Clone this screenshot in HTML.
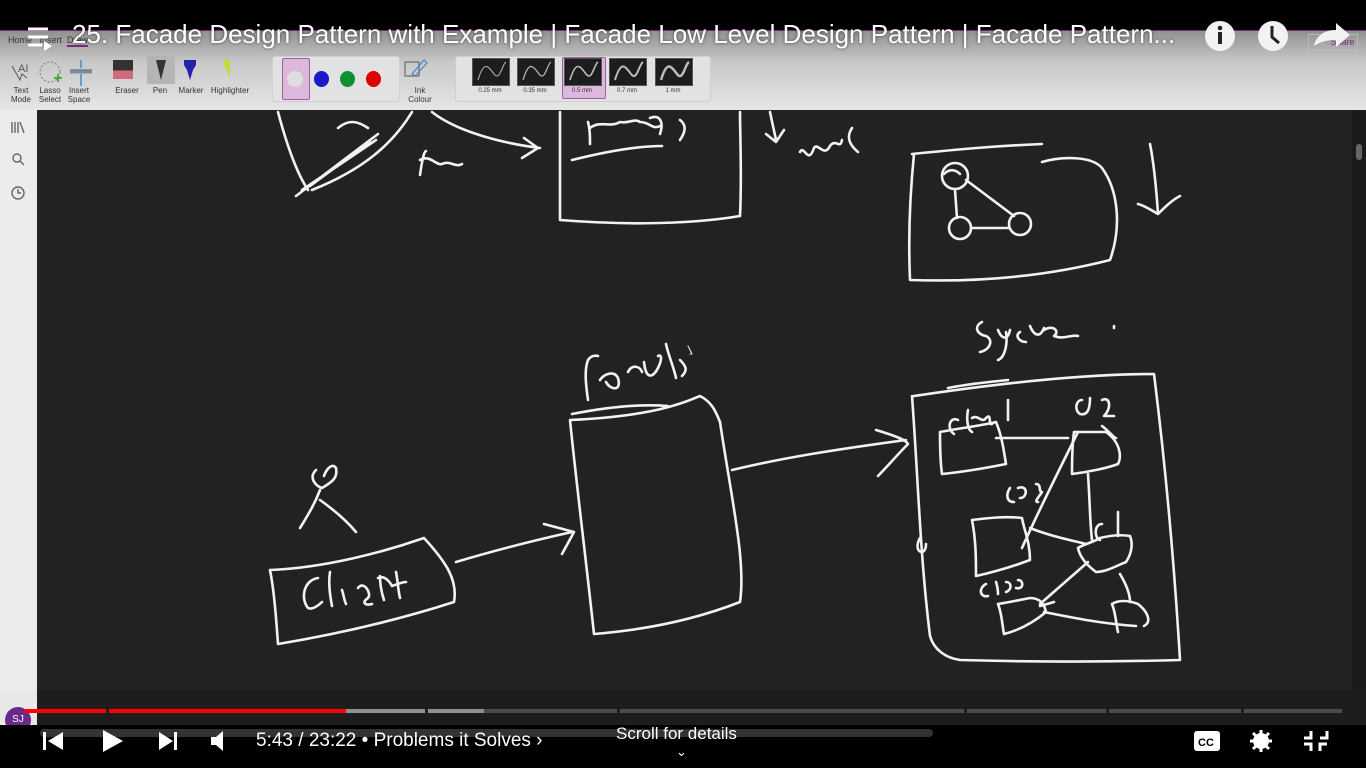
<!DOCTYPE html>
<html><head><meta charset="utf-8"><style>
html,body{margin:0;padding:0;width:1366px;height:768px;overflow:hidden;background:#000;font-family:"Liberation Sans",sans-serif}
.abs{position:absolute}
#tb{left:0;top:30px;width:1366px;height:80px;background:linear-gradient(#8f8f8f,#c8c8c8 40%,#e6e6e6);border-bottom:1px solid #aaa}
#side{left:0;top:110px;width:37px;height:615px;background:#ececec}
#canvas{left:37px;top:110px;width:1315px;height:615px;background:#222}
#sb{left:1352px;top:110px;width:14px;height:615px;background:#1b1b1b}
.lbl{font-size:8px;color:#333;text-align:center;line-height:9px}
.grp{background:#e2e2e2;border:1px solid #cfcfcf;border-radius:3px}
.pen{width:36px;height:26px;background:#1d1d1d;border:1px solid #555}
.mm{font-size:6px;color:#333;text-align:center}
#title{left:72px;top:19px;color:#fff;font-size:26px;white-space:nowrap;text-shadow:0 0 3px rgba(0,0,0,.6)}
.ctl{color:#fff;font-size:19px}
</style></head><body>
<div class="abs" id="tb"></div>
<div class="abs" style="left:0;top:30px;width:1366px;height:1px;background:#7a2a7a"></div>
<div class="abs" style="left:8px;top:35px;font-size:9px;color:#333">Home &nbsp; Insert &nbsp;<span style="border-bottom:2px solid #7a2a7a">Draw</span></div>
<!-- tools -->
<svg class="abs" style="left:8px;top:58px" width="90" height="30" viewBox="0 0 90 30"><path d="M4 8l8 14 2-6 5 4" fill="none" stroke="#555"/><text x="10" y="14" font-size="11" fill="#555" font-family="Liberation Sans">AI</text><circle cx="42" cy="14" r="10" fill="none" stroke="#777" stroke-dasharray="2 2"/><path d="M46 20h8M50 16v8" stroke="#2a2" stroke-width="1.5"/><path d="M62 12h22M73 2v8M73 16v12" stroke="#4a8ac6" stroke-width="1.5"/><path d="M62 14h22" stroke="#888" stroke-width="3"/></svg>
<div class="abs lbl" style="left:6px;top:86px;width:30px">Text<br>Mode</div>
<div class="abs lbl" style="left:35px;top:86px;width:30px">Lasso<br>Select</div>
<div class="abs lbl" style="left:64px;top:86px;width:30px">Insert<br>Space</div>
<div class="abs" style="left:113px;top:60px;width:20px;height:19px;background:linear-gradient(#333 55%,#d06a7a 55%)"></div>
<div class="abs" style="left:147px;top:56px;width:28px;height:28px;background:#b5b5b5;border-radius:2px"></div>
<svg class="abs" style="left:150px;top:58px" width="80" height="24"><path d="M6 2h10l-2 8-3 12-3-12z" fill="#333"/><path d="M34 2h12v5l-3 5-3 10-3-10-3-5z" fill="#2222aa"/><path d="M74 2h12v6l-3 4-3 8-3-8-3-4z" fill="#c8d838"/></svg>
<div class="abs lbl" style="left:110px;top:86px;width:34px">Eraser</div>
<div class="abs lbl" style="left:148px;top:86px;width:24px">Pen</div>
<div class="abs lbl" style="left:176px;top:86px;width:30px">Marker</div>
<div class="abs lbl" style="left:207px;top:86px;width:46px">Highlighter</div>
<div class="abs grp" style="left:272px;top:56px;width:126px;height:44px"></div>
<div class="abs" style="left:282px;top:58px;width:26px;height:40px;background:#dcb8dc;border:1px solid #a060a0;border-radius:2px"></div>
<div class="abs" style="left:287px;top:71px;width:16px;height:16px;border-radius:50%;background:#ddd"></div>
<div class="abs" style="left:314px;top:71px;width:15px;height:16px;border-radius:50%;background:#1a1acc"></div>
<div class="abs" style="left:340px;top:71px;width:15px;height:16px;border-radius:50%;background:#109030"></div>
<div class="abs" style="left:366px;top:71px;width:15px;height:16px;border-radius:50%;background:#dd0000"></div>
<svg class="abs" style="left:404px;top:58px" width="36" height="22"><rect x="1" y="4" width="14" height="14" fill="none" stroke="#555"/><path d="M8 16l12-14 3 3-12 13z" fill="none" stroke="#3a7ac6"/></svg>
<div class="abs lbl" style="left:404px;top:86px;width:32px">Ink<br>Colour</div>
<div class="abs grp" style="left:455px;top:56px;width:254px;height:44px"></div>
<div class="abs" style="left:562px;top:57px;width:42px;height:40px;background:#dcb8dc;border:1px solid #a060a0;border-radius:2px"></div>
<div class="abs pen" style="left:472px;top:58px"></div><div class="abs pen" style="left:517px;top:58px"></div><div class="abs pen" style="left:564px;top:58px"></div><div class="abs pen" style="left:609px;top:58px"></div><div class="abs pen" style="left:655px;top:58px"></div>
<svg class="abs" style="left:472px;top:58px" width="240" height="28" fill="none" stroke="#bbb"><path d="M6 22c6-20 10-14 16-6s8-10 12-12" stroke-width="1"/><path d="M51 22c6-20 10-14 16-6s8-10 12-12" stroke-width="1.2"/><path d="M98 22c6-20 10-14 16-6s8-10 12-12" stroke-width="1.6"/><path d="M143 22c6-20 10-14 16-6s8-10 12-12" stroke-width="2"/><path d="M189 22c6-20 10-14 16-6s8-10 12-12" stroke-width="2.5"/></svg>
<div class="abs mm" style="left:470px;top:88px;width:40px">0.25 mm</div><div class="abs mm" style="left:515px;top:88px;width:40px">0.35 mm</div><div class="abs mm" style="left:562px;top:88px;width:40px">0.5 mm</div><div class="abs mm" style="left:607px;top:88px;width:40px">0.7 mm</div><div class="abs mm" style="left:653px;top:88px;width:40px">1 mm</div>
<div class="abs" style="left:1308px;top:34px;width:48px;height:15px;border:1px solid #bbb;font-size:9px;color:#7a2a7a;text-align:right;line-height:15px">Share&nbsp;</div>

<div class="abs" id="side"></div>
<svg class="abs" style="left:8px;top:118px" width="22" height="84" fill="none" stroke="#666" stroke-width="1.4"><path d="M4 4v11M7 4v11M10 4v11M12 4l4 11"/><circle cx="9" cy="40" r="4"/><path d="M12 43l4 4"/><circle cx="10" cy="75" r="6"/><path d="M10 71v4h3"/></svg>
<div class="abs" id="canvas"></div>
<div class="abs" id="sb"><div style="margin:34px 0 0 4px;width:6px;height:16px;background:#666;border-radius:3px"></div></div>

<svg class="abs" style="left:0;top:0" width="1366" height="768" fill="none" stroke="#f2f2f2" stroke-width="2.6" stroke-linecap="round" stroke-linejoin="round">
<!-- top-left shapes -->
<path d="M278 112c8 30 18 60 30 78M312 190c50-20 80-45 100-78"/>
<path d="M296 196l82-62M302 190l74-50M310 186l60-44M338 128c10-8 18-8 30 0"/>
<path d="M420 175c2-14 4-24 6-24M420 160c10-6 16 6 22 4 8-4 14 4 20 0M432 112c20 16 60 30 108 36M524 138l14 10-16 10"/>
<path d="M560 112v108c50 4 120 6 180-4 2-40 0-80 0-104"/>
<path d="M588 122c2 8 2 14 2 22M590 128c10-8 20 0 30-6 8 2 14-4 20 0 10 0 12 8 20 4M650 118c10-4 14 4 10 16M680 120c8 6 4 14 0 20M572 160c40-10 70-14 90-14"/>
<path d="M770 112c2 10 4 18 6 28M766 134l10 8 8-12M800 152c4-8 8 14 14-4 4-6 10 10 16-2 6-8 10 4 12-6M852 128c-4 6-6 14 6 24"/>
<path d="M914 154c-4 40-6 80-4 126 60 2 130-2 200-20 12-34 8-70-8-92-10-12-40-12-60-6M912 154c40-4 80-8 130-10"/>
<circle cx="955" cy="176" r="13"/><circle cx="960" cy="228" r="11"/><circle cx="1020" cy="224" r="11"/><path d="M955 190l2 28M966 180l48 36M972 228h36M944 174c6-6 12-4 16 0"/>
<path d="M1150 144c4 20 6 40 8 70M1138 204c8 2 16 8 20 10 6-6 14-14 22-18"/>
<!-- facade -->
<path d="M588 400c-2-14-4-30 0-40 4-6 10-4 10-4M600 380c4-6 14-10 18-2 4 14-8 12-12 4M628 372c4-8 12-6 14 0M644 362c2 20 10 14 14 6s4-14 0-12M666 344c2 10 8 24 10 34M680 360c6 6 8 10 2 16M572 414c40-8 70-10 96-8"/>
<path d="M570 420c6 60 16 140 24 214 50-4 100-14 146-32 6-40-8-100-20-180-4-10-8-20-20-26-10 4-40 20-130 24"/>
<path d="M732 470c50-12 100-20 174-30M876 430c20 6 30 10 32 14-10 10-22 24-30 32"/>
<!-- client -->
<path d="M316 470c-8 8 0 16 6 18 10-6 16-10 14-20-4-6-10 2-12 8M320 490c-6 16-14 28-20 38M320 500c14 10 26 20 36 32"/>
<path d="M270 570c4 20 6 46 8 74 60-10 120-24 176-42 4-22-8-40-30-64-40 14-100 30-154 32"/>
<path d="M318 578c-14 2-18 20-10 30 4 2 10-2 14-6M330 572c-2 12 0 24 2 34M342 590c2 6 2 10 4 14M358 588c6-8 14 6 10 10-6 4-4 8 4 6M380 576c0 10 2 18 4 24M378 578c8-4 14 8 14 8M392 586c6-2 10-4 14-4M396 572c2 10 2 18 4 26"/>
<path d="M456 562c40-12 80-22 116-30M544 524l30 8-12 22"/>
<!-- system -->
<path d="M982 322c-8 4-6 12 4 14 8 4 4 14-6 16M998 330c4 10 10 10 12 0M1006 332c2 14-2 26-8 28M1020 332c-6 4 0 10 6 10M1030 326c4 10 10 12 14 2M1044 330c10-6 16 2 10 6 10 4 18-2 24 0M1114 326v2"/>
<path d="M912 396c6 80 8 160 18 240 4 14 16 22 30 24 74 2 150 2 220 0-6-100-14-190-26-286-70 0-160 10-240 22M948 388c20-4 40-6 60-8M920 538c-8 14 6 20 6 6"/>
<path d="M958 420c-8-4-12 8-4 14M968 410c-2 10 0 20 4 22M972 418c6-4 10 6 14 0 6-6 2 8 6 6M1008 400v20M1082 400c-6 0-8 10-2 14 8 2 10-6 10-16M1102 400c8-4 10 8 2 16h10"/>
<path d="M940 432c20-4 40-6 56-10 6 14 8 30 10 42-20 4-44 8-64 10-2-14-2-28-2-42zM996 438h72M1074 432h32c14 10 16 24 12 32-10 4-30 8-46 10 0-14 0-28 2-42M1102 426c8 6 12 12 14 12"/>
<path d="M1088 474c2 30 2 50 4 66M1078 432c-20 40-40 80-56 116"/>
<path d="M1010 488c-4 6-4 14 4 14M1018 488c10-4 10 10 2 10M1036 484c6 0 2 8 6 8-4 6-8 10-4 10"/>
<path d="M972 520c4 20 4 40 4 56 18-4 38-10 54-16 0-18-6-30-8-42-16-2-34 0-50 2M1030 528c20 8 40 12 56 16"/>
<path d="M1102 524c-8 0-8 14-2 16M1118 512v24"/>
<path d="M1078 548c6-4 16-6 22-10 8-2 18-4 30-2 4 10 0 20-4 26-10 4-20 10-30 10-8-6-16-14-18-24M1088 562l-48 42M1040 606l14-4"/>
<path d="M986 584c-8 4-6 14 2 12M996 582c2 6 2 10 2 12M1006 582c6 0 6 8 0 10M1018 580c6 0 6 10-2 8"/>
<path d="M998 604c4 10 4 20 6 30 16-4 30-12 42-22-2-10-8-14-16-14-10 2-20 4-32 6M1044 612c30 6 60 12 92 14M1112 604c6-4 16-4 26 0 10 8 14 18 6 22M1112 604c4 10 4 20 6 28M1120 574c6 10 10 20 10 28"/>
<path d="M688 346l4 8-2 0" stroke-width="1"/>
</svg>

<!-- progress area -->
<div class="abs" style="left:0;top:690px;width:1366px;height:35px;background:#1d1d1d"></div>
<div class="abs" style="left:0;top:690px;width:37px;height:35px;background:#e8e8e8"></div>
<div class="abs" style="left:5px;top:707px;width:26px;height:26px;border-radius:50%;background:#6a2a8a;color:#fff;font-size:10px;line-height:26px;text-align:center">SJ</div>
<div class="abs" style="left:24px;top:709px;width:1318px;height:4px;background:#4a4a4a"></div>
<div class="abs" style="left:346px;top:709px;width:138px;height:4px;background:#909090"></div>
<div class="abs" style="left:24px;top:709px;width:322px;height:4px;background:#f00"></div>
<div class="abs" style="left:106px;top:709px;width:3px;height:4px;background:#1d1d1d"></div>
<div class="abs" style="left:425px;top:709px;width:3px;height:4px;background:#1d1d1d"></div>
<div class="abs" style="left:617px;top:709px;width:3px;height:4px;background:#1d1d1d"></div>
<div class="abs" style="left:964px;top:709px;width:3px;height:4px;background:#1d1d1d"></div>
<div class="abs" style="left:1106px;top:709px;width:3px;height:4px;background:#1d1d1d"></div>
<div class="abs" style="left:1241px;top:709px;width:3px;height:4px;background:#1d1d1d"></div>
<div class="abs" style="left:0;top:725px;width:1366px;height:43px;background:#000"></div>
<div class="abs" style="left:40px;top:729px;width:893px;height:8px;background:#333;border-radius:4px"></div>
<!-- controls -->
<svg class="abs" style="left:40px;top:728px" width="200" height="26" fill="#fff"><rect x="3" y="4" width="3" height="18"/><path d="M23 4v18L8 13z"/><path d="M63 2v22l20-11z"/><path d="M119 4v18l14-9z"/><rect x="134" y="4" width="3" height="18"/><path d="M171 9h5l7-6v20l-7-6h-5z"/></svg>
<div class="abs ctl" style="left:256px;top:730px">5:43 / 23:22 • Problems it Solves ›</div>
<div class="abs" style="left:616px;top:724px;color:#fff;font-size:17px">Scroll for details</div>
<div class="abs" style="left:676px;top:744px;color:#fff;font-size:13px">⌄</div>
<svg class="abs" style="left:1192px;top:728px" width="140" height="26"><rect x="2" y="3" width="26" height="20" rx="3" fill="#fff"/><text x="6" y="18" font-size="11" font-weight="bold" fill="#000" font-family="Liberation Sans">CC</text><circle cx="69" cy="13" r="8" fill="#fff"/><circle cx="69" cy="13" r="3" fill="#000"/><path d="M69 2v22M58 13h22M61 5l16 16M77 5L61 21" stroke="#fff" stroke-width="3"/><path d="M119 3v7h-7M128 10h7V3M112 16h7v7M135 16h-7v7" stroke="#fff" stroke-width="3" fill="none"/></svg>
<!-- top overlay -->
<div class="abs" style="left:0;top:0;width:1366px;height:30px;background:#000"></div>
<svg class="abs" style="left:28px;top:27px" width="28" height="26"><path d="M0 2h20M0 10h20M0 18h14" stroke="#fff" stroke-width="3"/><path d="M16 14v10l8-5z" fill="#fff"/></svg>
<div class="abs" id="title">25. Facade Design Pattern with Example | Facade Low Level Design Pattern | Facade Pattern...</div>
<svg class="abs" style="left:1203px;top:20px" width="150" height="34"><circle cx="17" cy="16" r="15" fill="#f2f2f2"/><rect x="15" y="12" width="4" height="12" fill="#222"/><circle cx="17" cy="8" r="2.3" fill="#222"/><circle cx="70" cy="16" r="15" fill="#f2f2f2"/><path d="M69 6v11l7 6" stroke="#222" stroke-width="3" fill="none"/><path d="M111 26c2-10 10-16 22-16v-7l14 12-14 12v-7c-10 0-16 2-22 6z" fill="#f2f2f2"/></svg>
</body></html>
